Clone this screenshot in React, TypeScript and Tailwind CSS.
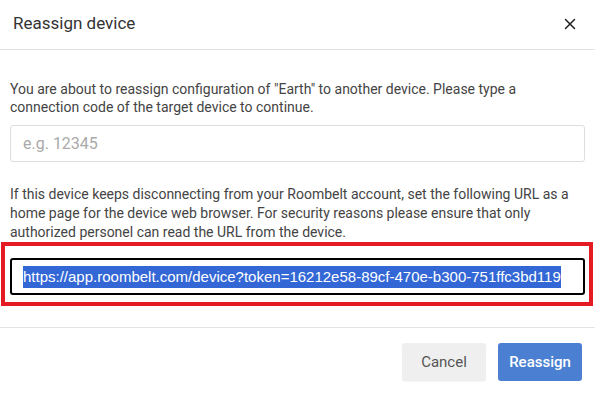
import { X } from "lucide-react";

const url =
  "https://app.roombelt.com/device?token=16212e58-89cf-470e-b300-751ffc3bd119";

export default function App() {
  return (
    <div className="flex h-[393px] w-[595px] flex-col bg-white font-['Roboto',sans-serif] text-[#444]">
      {/* header */}
      <div className="flex h-[50px] items-center justify-between border-b border-[#e3e3e3] pl-[13px] pr-[16px]">
        <h2 className="pb-[2px] text-[17px] text-[#333]">Reassign device</h2>
        <X size={18} strokeWidth={2} className="-mt-[2px] text-[#222]" />
      </div>

      {/* body */}
      <div className="flex flex-col px-[10px] pt-[30px]">
        <p className="text-[14px] leading-[18px]">
          You are about to reassign configuration of "Earth" to another device.
          Please type a connection code of the target device to continue.
        </p>
        <input
          placeholder="e.g. 12345"
          className="mt-[9px] h-[37px] rounded-[3px] border border-[#dedede] px-[12px] text-[16px] placeholder:text-[#aaa] outline-none"
        />
        <p className="mt-[23px] text-[14px] leading-[19px]">
          If this device keeps disconnecting from your Roombelt account, set the
          following URL as a home page for the device web browser. For security
          reasons please ensure that only authorized personel can read the URL
          from the device.
        </p>
        <div className="-ml-[9px] -mr-[8px] border-[4px] border-[#e41b23] pb-[7px] pl-[5px] pr-[4px] pt-[12px]">
          <div className="flex h-[37px] items-center overflow-hidden rounded-[3px] border-2 border-black pl-[11px]">
            <span className="whitespace-nowrap bg-[#3367d6] font-['Liberation_Sans',Arial,sans-serif] text-[15px] leading-[22px] text-white">
              {url}
            </span>
          </div>
        </div>
      </div>

      {/* footer */}
      <div className="mt-[21px] flex justify-end gap-[12px] border-t border-[#e3e3e3] pr-[13px] pt-[15px]">
        <button className="h-[38px] w-[84px] rounded-[3px] bg-[#efefef] text-[15px] text-[#555] shadow-[0_1px_1px_rgba(0,0,0,0.04)]">
          Cancel
        </button>
        <button className="h-[38px] w-[84px] rounded-[3px] bg-[#4a7fd1] text-[15px] font-medium text-white">
          Reassign
        </button>
      </div>
    </div>
  );
}
